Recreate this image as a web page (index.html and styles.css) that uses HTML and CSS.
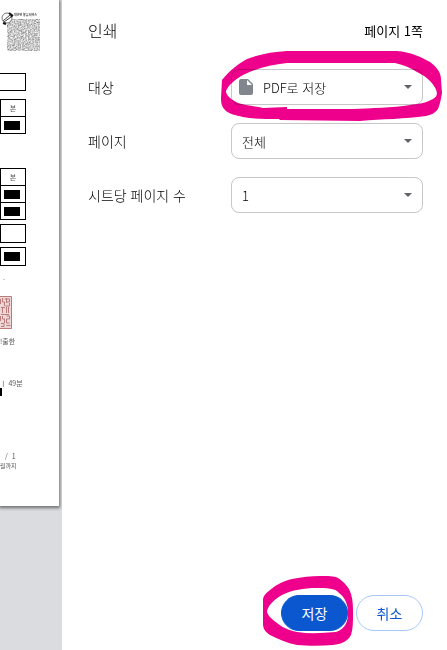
FILE: index.html
```
<!DOCTYPE html>
<html lang="ko">
<head>
  <meta charset="UTF-8" />
  <meta name="viewport" content="width=device-width, initial-scale=1.0"/>
  <title>인쇄</title>
  <link rel="stylesheet" href="styles.css">
</head>
<body>

  <div class="preview">
    <div class="sheet">
      <div class="stamp">
        <svg class="stamp-logo" width="40" height="40" viewBox="0 0 40 40">
          <defs>
            <filter id="grain" x="0" y="0" width="1" height="1" color-interpolation-filters="sRGB">
              <feTurbulence type="fractalNoise" baseFrequency="0.7" numOctaves="2" seed="4"/>
              <feColorMatrix values="0.8 0 0 0 0.38  0.8 0 0 0 0.38  0.8 0 0 0 0.38  0 0 0 0 1"/>
            </filter>
          </defs>
          <rect x="7" y="7" width="33" height="32" filter="url(#grain)"/>
          <circle cx="7" cy="6" r="5" fill="#fff" stroke="#777" stroke-width="1"/>
          <path d="M3 9l7-6M4 10l7-5" stroke="#444" stroke-width="1" fill="none"/>
          <path d="M9 1l4 3M11 3l1 2M3 11l3 1" stroke="#111" stroke-width="2" fill="none"/>
        </svg>
        <span class="stamp-name">대한민 봉유서비스</span>
      </div>

      <table class="grid open">
        <tr><td></td></tr>
      </table>
      <table class="grid">
        <tr><td>본</td></tr>
        <tr><td><span class="redact"></span></td></tr>
      </table>
      <table class="grid far">
        <tr><td>본</td></tr>
        <tr><td><span class="redact"></span></td></tr>
        <tr><td><span class="redact"></span></td></tr>
      </table>
      <table class="grid near">
        <tr><td></td></tr>
      </table>
      <table class="grid near">
        <tr><td><span class="redact"></span></td></tr>
      </table>

      <p class="line-end">.</p>
      <svg class="seal" width="12" height="33" viewBox="0 0 12 33">
        <rect width="12" height="33" fill="#ecd6d6"/>
        <path d="M0 .5h11.5v32H0" fill="none" stroke="#b97c7c"/>
        <path d="M.5 3v5M2.5 2v4h2v4M6.5 2v5M4.5 3h5v3h-3M9.5 7v3h-4M1 11.5h4M2.5 12v5M6.5 11v6M8.5 11v6M1 18.5h8M.5 20v5M2.5 20v3h2v4M6.5 20h3v3h-3v4h3M1 27.5h3v3H1M6.5 29.5h4" fill="none" stroke="#b97c7c"/>
      </svg>
      <p class="line-issue">!출한</p>
      <p class="line-time">ㅣ 49분</p>
      <span class="redact-edge"></span>
      <p class="line-page">/ &nbsp;1</p>
      <p class="line-until">월까지</p>
    </div>
  </div>

  <form class="sidebar">
    <header class="header">
      <h1>인쇄</h1>
      <span>페이지 1쪽</span>
    </header>

    <div class="settings">
      <div class="row">
        <label for="destination">대상</label>
        <div class="control">
          <svg class="file-icon" width="14" height="18" viewBox="0 0 14 18">
            <path d="M2 1h7l5 5v9a2 2 0 0 1-2 2H2a2 2 0 0 1-2-2V3a2 2 0 0 1 2-2z" fill="#80868b"/>
            <path d="M8 2v5h5z" fill="#fff"/>
          </svg>
          <select id="destination">
            <option>PDF로 저장</option>
          </select>
          <svg class="caret" width="8" height="4" viewBox="0 0 8 4"><path d="M0 0h8L4 4z"/></svg>
          <svg class="mark mark-destination" width="222" height="72" viewBox="220 50 222 72">
            <path fill-rule="evenodd" d="M222 80C230 70 238 64 247 59C260 54 273 52 287 51H397C410 52 421 57 430 62C437 67 441 73 441 79L442 93C441 99 440 104 438 109C435 113 431 115 426 116C405 119 383 119 360 121L280 120L279 119C266 119 253 119 243 117C235 115 230 114 226 111C222 107 221 104 221 98ZM226 91C229 84 236 79 243 75C257 68 270 65 287 63H395C404 65 411 68 417 72C425 76 430 80 434 86C438 92 438 96 433 99C426 103 418 104 410 105C392 108 372 108 352 109L287 109L287 107L263 108C253 106 244 105 238 103C230 99 226 95 226 91Z"/>
          </svg>
        </div>
      </div>

      <div class="row">
        <label for="pages">페이지</label>
        <div class="control">
          <select id="pages">
            <option>전체</option>
          </select>
          <svg class="caret" width="8" height="4" viewBox="0 0 8 4"><path d="M0 0h8L4 4z"/></svg>
        </div>
      </div>

      <div class="row">
        <label for="perSheet">시트당 페이지 수</label>
        <div class="control">
          <select id="perSheet">
            <option>1</option>
          </select>
          <svg class="caret" width="8" height="4" viewBox="0 0 8 4"><path d="M0 0h8L4 4z"/></svg>
        </div>
      </div>
    </div>

    <footer class="actions">
      <div class="save">
        <button type="button" class="primary">저장</button>
        <svg class="mark mark-save" width="92" height="72" viewBox="262 575 92 72">
          <path fill-rule="evenodd" d="M263 600C263 596 266 593 270 590C277 584 284 581 292 579C302 577 311 576 320 576C328 576 334 576 338 578C344 582 349 587 351 594C353 600 353 607 353 614C353 622 353 629 351 635C347 642 341 644 333 645C321 646 308 646 297 645C287 643 278 639 270 635C265 632 263 628 263 624ZM267 611C269 604 275 599 282 595C292 590 304 588 316 588C327 588 335 588 339 593C345 597 348 605 348 613C348 622 345 629 336 632C323 633 310 634 297 632C285 630 278 624 272 619C269 616 267 614 267 611Z"/>
        </svg>
      </div>
      <button type="button" class="secondary">취소</button>
    </footer>
  </form>

</body>
</html>
```

FILE: styles.css
```
* { box-sizing: border-box; }

body {
  margin: 0;
  min-height: 100vh;
  display: flex;
  background: #fff;
  color: #000;
  font-family: "Noto Sans CJK KR", sans-serif;
  font-size: 13px;
  font-weight: 300;
}

/* Preview pane */
.preview {
  width: 62px;
  flex-shrink: 0;
  overflow: hidden;
  background: #dadce0;
}

.sheet {
  width: 59px;
  padding: 12px 0 35px;
  background: #fff;
  box-shadow: 0 1px 3px 1px rgba(0, 0, 0, 0.5);
  color: #555;
  font-size: 7px;
  font-weight: 400;
  line-height: 10px;
}

.sheet p { margin: 0; }

.stamp {
  position: relative;
  height: 61px;
}

.stamp-logo { display: block; }

.stamp-name {
  position: absolute;
  top: -2px;
  left: 14px;
  color: #333;
  font-size: 3px;
  font-weight: 700;
  white-space: nowrap;
}

.grid {
  width: 26px;
  margin-bottom: 8px;
  border-collapse: collapse;
}

.grid td {
  height: 17px;
  padding: 0;
  border: 1px solid #000;
  text-align: center;
}

.grid.open td { border-left: none; }
.grid.far { margin-top: 34px; }
.grid.far, .grid.near { margin-bottom: 4px; }
.grid.near td { height: 18px; }

.redact {
  display: block;
  width: 16px;
  height: 9px;
  margin-left: 3px;
  background: #000;
}

.line-end { padding: 2px 0 0 3px; }

.seal {
  display: block;
  margin: 14px 0 7px;
}

.line-time { padding-top: 32px; }

.redact-edge {
  display: block;
  width: 2px;
  height: 8px;
  background: #000;
}

.line-page { padding: 55px 0 0 5px; }

.line-until { font-size: 6px; }

/* Settings */
.sidebar {
  flex: 1;
  display: flex;
  flex-direction: column;
  padding: 0 24px 19px 26px;
}

.header {
  display: flex;
  align-items: center;
  justify-content: space-between;
  height: 60px;
}

.header h1 {
  margin: 0;
  font-size: 16px;
  font-weight: 300;
}

.header span { font-weight: 400; }

.settings {
  display: flex;
  flex-direction: column;
  gap: 18px;
  padding-top: 9px;
}

.row {
  display: grid;
  grid-template-columns: 143fr 192fr;
  align-items: center;
}

.row label { font-size: 14px; }

.control {
  position: relative;
  display: flex;
  align-items: center;
  height: 36px;
  border: 1px solid #c7c7c7;
  border-radius: 8px;
}

.control select {
  flex: 1;
  min-width: 0;
  height: 34px;
  padding: 0 24px 0 10px;
  border: none;
  background: transparent;
  appearance: none;
  color: inherit;
  font: inherit;
}

.file-icon { margin-left: 7px; }

.caret {
  margin: 0 10px 0 -18px;
  fill: #5f6368;
  pointer-events: none;
}

.actions {
  display: flex;
  justify-content: flex-end;
  gap: 8px;
  margin-top: auto;
}

.actions button {
  width: 67px;
  height: 36px;
  padding: 0;
  border: 1px solid #a8c7fa;
  border-radius: 18px;
  background: #fff;
  color: #0b57d0;
  font-family: inherit;
  font-size: 14px;
  font-weight: 400;
  cursor: pointer;
}

.actions .primary {
  border-color: #0b57d0;
  background: #0b57d0;
  color: #fff;
}

.save { position: relative; }

/* Highlighter rings */
.mark {
  position: absolute;
  fill: #ef008c;
  mix-blend-mode: multiply;
  pointer-events: none;
}

.mark-destination {
  top: -20px;
  left: -12px;
}

.mark-save {
  top: -20px;
  left: -19px;
}
```
